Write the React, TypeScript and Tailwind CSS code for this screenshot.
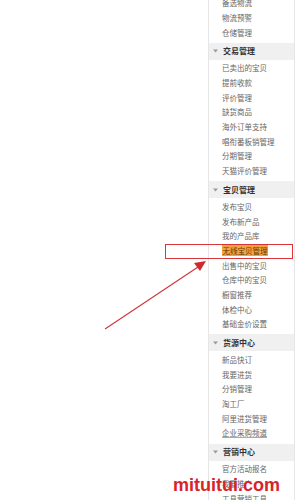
const sections = [
  { title: null, items: ["备选物流", "物流预警", "仓储管理"] },
  {
    title: "交易管理",
    items: ["已卖出的宝贝", "提前收款", "评价管理", "缺货商品", "海外订单支持", "唱衔番板销管理", "分期管理", "天猫评价管理"],
  },
  {
    title: "宝贝管理",
    items: ["发布宝贝", "发布新产品", "我的产品库", "无线宝贝管理", "出售中的宝贝", "仓库中的宝贝", "橱窗推荐", "体检中心", "基础金价设置"],
  },
  {
    title: "货源中心",
    items: ["新品快订", "我要进货", "分销管理", "淘工厂", "阿里进货管理", "企业采购频道"],
  },
  { title: "营销中心", items: ["官方活动报名", "我要推广", "工具营销工具"] },
];

function Caret() {
  return (
    <svg width="5" height="4" viewBox="0 0 5 4" className="shrink-0">
      <path d="M0 0.5 L5 0.5 L2.5 3.5 Z" fill="#9a9a9a" />
    </svg>
  );
}

export default function App() {
  return (
    <div
      className="relative w-[301px] h-[500px] overflow-hidden bg-white flex"
      style={{ fontFamily: '"Noto Sans CJK SC", "Noto Sans", sans-serif' }}
    >
      <div className="w-[208px] shrink-0" />
      <div className="w-[87px] shrink-0 border-l border-r border-[#e6e6e6]">
        <div className="-mt-[4.35px]">
          {sections.map((s, i) => (
            <div key={i}>
              {s.title && (
                <div className="mt-[3px] mb-[1px] h-[17px] bg-[#f0f0f0] flex items-center pl-[4px] gap-[5px]">
                  <Caret />
                  <span className="text-[8px] font-bold text-[#333] leading-none">{s.title}</span>
                </div>
              )}
              {s.items.map((it) => (
                <div key={it} className="h-[14.7px] flex items-center pl-[13px]">
                  <span
                    className={
                      it === "无线宝贝管理"
                        ? "text-[7.5px] leading-[11px] text-[#5a3a10] bg-[#f5a33c] px-[0.5px]"
                        : it === "企业采购频道"
                          ? "text-[7.5px] leading-none text-[#666] underline decoration-[#aaa]"
                          : "text-[7.5px] leading-none text-[#666]"
                    }
                  >
                    {it}
                  </span>
                </div>
              ))}
            </div>
          ))}
        </div>
      </div>

      <div className="absolute left-[165px] top-[244px] w-[128px] h-[15px] border-[1.5px] border-[#d8363b]" />

      <svg className="absolute left-0 top-0" width="301" height="500" viewBox="0 0 301 500">
        <line x1="105" y1="329" x2="198" y2="267" stroke="#d0353b" strokeWidth="1.1" />
        <path d="M206 261 L194 263 L200 271 Z" fill="#d02a30" />
      </svg>

      <div
        className="absolute left-[173px] top-[476px] text-[18px] font-bold leading-none text-[#d9232a]"
        style={{ fontFamily: '"Liberation Sans", Arial, sans-serif' }}
      >
        mituitui.com
      </div>
    </div>
  );
}
